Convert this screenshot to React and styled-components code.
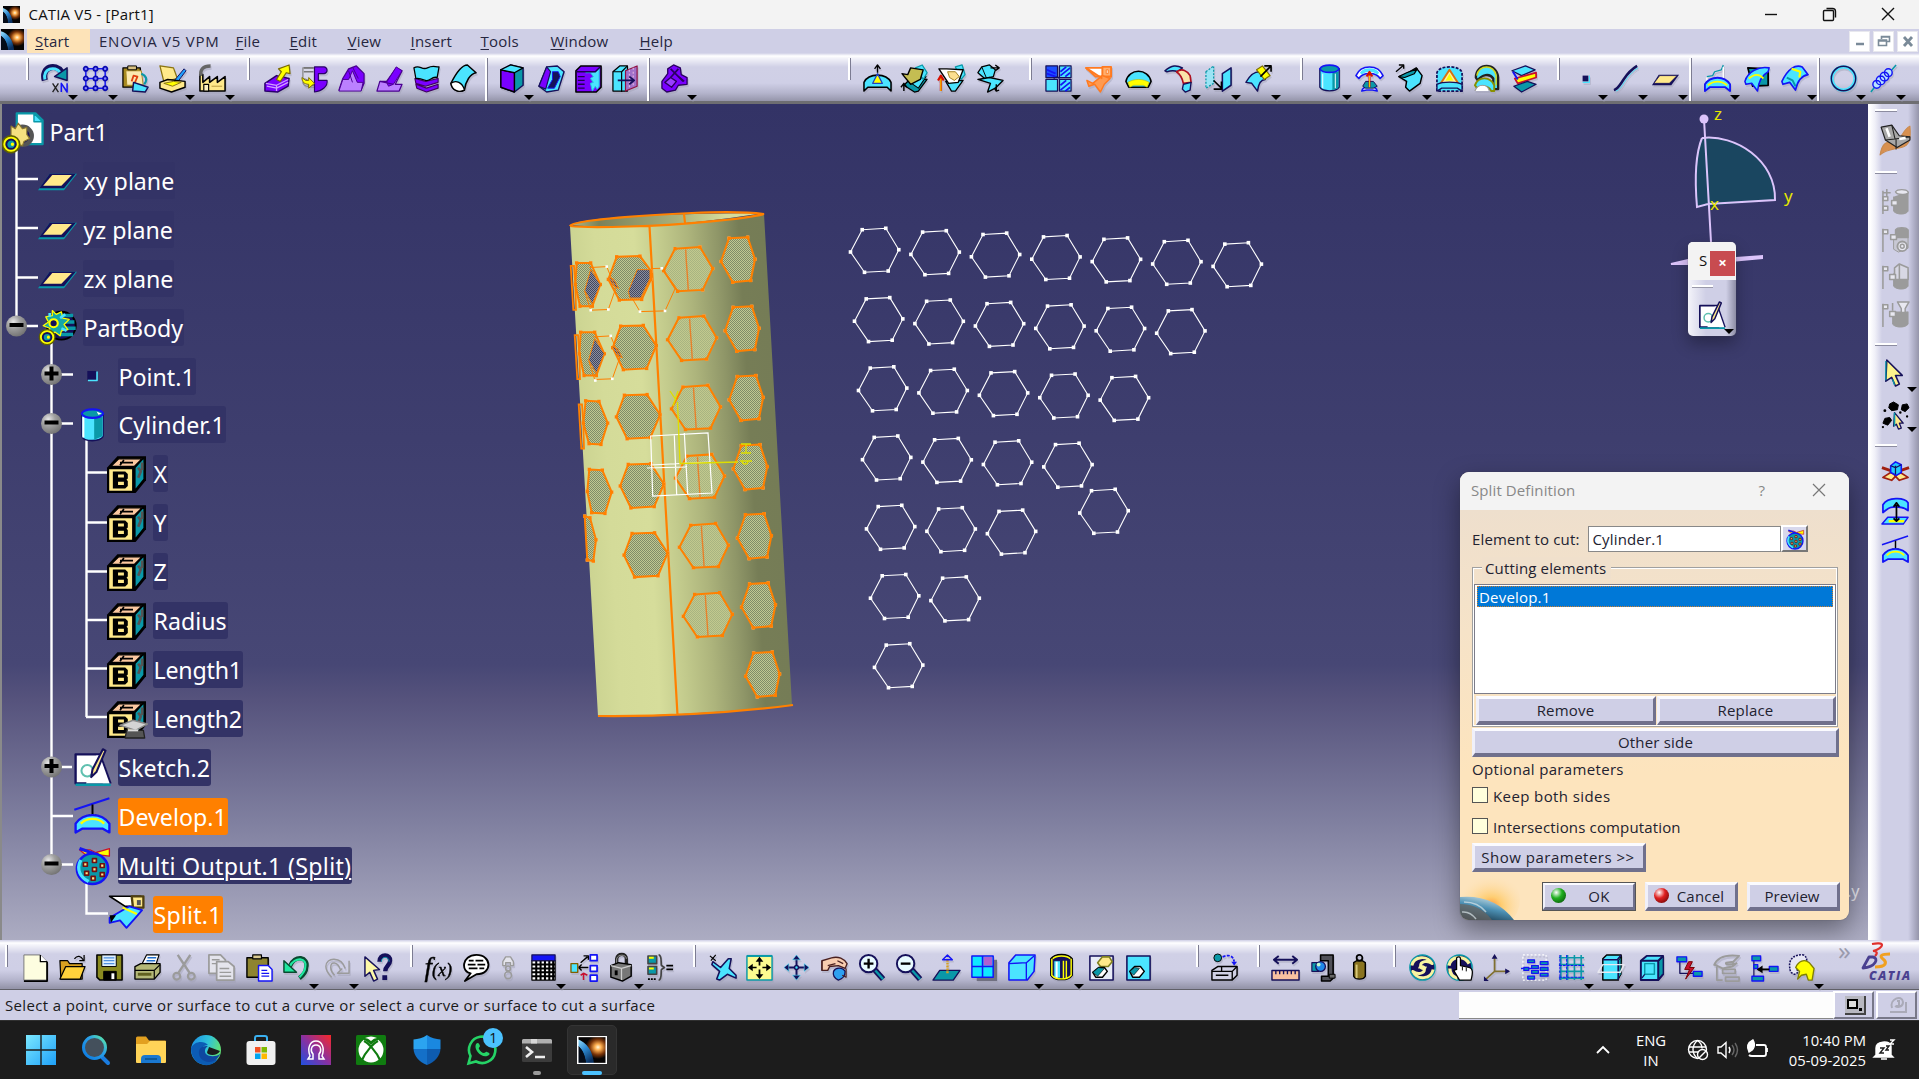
import React from "react";
import styled, { createGlobalStyle, css } from "styled-components";

const C = "#4be4ff", T = "#0a98a8", N = "#15105a", B = "#1414f5", P = "#7a00ff", L = "#bb80ff",
  Y = "#ffff00", K = "#000", S = "#ffe98a", W = "#fff", G = "#9b9b9b", O = "#ff8000", R = "#c8102e";

const ci = (x, y, r) => `M${x - r} ${y}a${r} ${r} 0 1 0 ${2 * r} 0a${r} ${r} 0 1 0 ${-2 * r} 0`;
const box = (x, y, w, h) => `M${x} ${y}h${w}v${h}h${-w}z`;

const PARAM = [
  ["M0 10L8 1h22v19l-8 10H0z", K, null, 0], ["M3 9l6-6h18l-6 6z", "#fbc8a0", K, 1], ["M10 6h10M13 4l-3 4", null, K, 1.3],
  ["M21.500 10l7-8v17l-7 9z", T, K, 1], ["M24 10l2 3-2 5M27 6v6", null, "#555", 2], [box(1, 10.5, 19, 18.5), S, K, 1.4],
  ["M4.500 13h9.500l2 2v3.500l-1 1 1 1v4l-2 2H4.500z", K, null, 0], [box(8.5, 15.3, 4.5, 2.4) + box(8.5, 21.2, 4.5, 2.4), S, null, 0],
];

/* Each icon is a list of [path, fill, stroke, stroke width] in a 30 x 30 box. */
const ICONS = {
  rotateN: [["M4 17C0 3 15-1 21 8", null, N, 6.5], ["M4 16C2 5 14 1 20 9", null, C, 3], ["M27 4V17L14 13z", T, N, 1.5], ["M12 20l6 9M18 20l-6 9", null, "#222", 1.4], ["M21 29v-9l6 9v-9", null, B, 1.6]],
  grid9: [["M5 2v26M15 2v26M25 2v26", null, B, 1.5], ["M2 5h26M2 15h26M2 25h26", null, B, 1.5], [ci(5, 5, 2.2) + ci(15, 5, 2.2) + ci(25, 5, 2.2) + ci(5, 15, 2.2) + ci(15, 15, 2.2) + ci(25, 15, 2.2) + ci(5, 25, 2.2) + ci(15, 25, 2.2) + ci(25, 25, 2.2), "#8080ff", "#0a0ab0", 1.8]],
  clipSurf: [["M2 4h18v20H2z", "#a88a20", K, 1.3], ["M5 7h16l2 15H6z", "#fbe9b0", "#a88a20", 1], ["M7 6V2h9v4z", "#d8c080", K, 1], ["M11 18l2-6 4 1-3 7", null, "#e04010", 1.8], ["M13 19l9 3 6 2-3 5-13-1z", C, N, 1.5], ["M21 10c5 2 7 6 3 11", null, T, 2.2]],
  paint: [["M2 2l14 2 4 11-14 3z", S, "#8a7410", 1.3], ["M27 5L17 17l-3 5 6-3L29 7z", "#20a0ff", N, 1], ["M2 19l8-3 18 2v6l-14 5L2 25z", S, K, 1.5], ["M6 20l10-2 8 1-9 4z", Y, "#8a7410", 1]],
  factory: [["M2 28V11h3v8l7-6v6l8-6v6l8-6v15z", S, K, 1.6], ["M3 12C2 6 5 2 13 2", null, "#666", 3.5], [box(6, 21, 5, 7), "#fff3c0", K, 1.2], ["M14 23h11", null, "#b89a40", 1]],
  pad: [["M2 20l12-8 13 3-1 8-11 6-13-1z", P, "#2a006a", 1.5], ["M3 20l11 2 12-6M14 22v6M4 23l10 2 12-6", null, "#d0a0ff", 1.3], ["M14 16l5-8-3-3L27 1l1 9-4-1-6 9z", Y, "#7a6a00", 1.2]],
  pocket: [["M3 4h12v20c-8 0-12-2-12-5 6 2 8-3 0-4z", "#d8d8e8", "#888", 1.3], ["M4 4h10M4 8h10M8 22h7", null, "#777", 1.6], ["M15 3h10c4 1 4 6 0 7h-6v7h9c1 6-5 11-13 12z", P, "#2a006a", 1.2], ["M2 14l4 3h3v-3l6 6-6 5v-4C4 21 2 18 2 14z", Y, "#7a6a00", 1]],
  loft: [["M2 27l4-12 6-10 8-3 8 8v10l-3 7z", P, "#4a0090", 1.3], ["M2 28l4-12h6l4-9 5 12h6l-2 9z", L, "#4a0090", 1], ["M12 7l4 12M16 3l6 12", null, "#4a0090", 1]],
  sweep: [["M2 28l3-10h7L22 4l6 3-7 14h7l-3 7z", L, "#4a0090", 1.3], ["M12 19L22 3l6 4-9 14-5 2z", P, "#4a0090", 1], ["M5 18l14 3", null, "#4a0090", 1.2]],
  thick: [["M3 15l11 3 13-3v4l-13 4-10-3zM4 21l11 4 12-4v4l-12 4-10-4z", P, "#400060", 1.2], ["M2 4c6-4 8 3 14 0s7-1 12-1l-2 11c-6-2-7 5-12 3s-7-3-10-2z", C, K, 1.3]],
  close: [["M2 20C9 6 14 1 19 1l9 8C22 10 17 18 16 27c-6 3-13 0-14-7z", C, K, 1.5], ["M2 20c5-4 12-1 14 7-6 3-13 0-14-7z", W, K, 1.3]],
  cubeP: [["M4 6l10-5 13 3v18l-9 7L4 24z", T, N, 1.5], ["M4 6l14 3v20L4 24z", P, K, 1.5], ["M4 6l10-5 13 3-9 5z", C, K, 1.3]],
  shellP: [["M10 3l11-1 7 6-6 19-12 2-8-6z", C, N, 1.5], ["M10 3l4 5-5 18-7-3z", P, N, 1.2], ["M16 8h6l2 5-6 12h-7l5-9z", N, B, 1]],
  splitP: [["M2 7l5-5h21v22l-5 5H2z", P, K, 1.6], ["M12 9l11-1 3-3v18l-2 3-2-3-3 5-2-8 3-1-3-4 3-2-3-4z", C, "#20c8e0", 1], ["M2 8h20l5-5", null, "#200050", 1.5], ["M4 13h7M4 17h7M4 21h7M4 25h7", null, "#200050", 1.4]],
  cubeArrow: [["M2 8l7-6h8v26H2z", C, K, 1.3], ["M2 8h9v21M11 8l6-6", null, K, 1.2], ["M15 7l12-5v21l-12 5z", "#a070c8", "#901040", 1.2], ["M19 6v18M23 4v18", null, "#e0b0e0", 1.2, "2 2"], ["M7 17h16M19 13l5 4-5 4", null, N, 1.8]],
  boolP: [["M2 18l6-8 0-5 6-4 7 3 1 7 6 3 0 7-9 1-3 5-9 2-5-4z", P, "#2a0060", 1.4], ["M5 19l6-5 6 4-5 6z", "#9a40ff", "#2a0060", 1.4], ["M11 5l13 13M19 5l-8 9M18 12l7 6", null, "#2a0060", 1.8]],
  extrude: [["M1 28V19C6 9 24 9 29 19v9l-4-4H5z", C, K, 1.6], ["M15 10l5 10H10z", Y, "#2040c0", 1.3], ["M15 9V2M12 5l3-4 3 4", null, K, 1.4]],
  offset: [["M4 22l7-7 17 1-9 12-4 1z", T, K, 1.3], ["M9 18l18-5-8 12z", C, K, 1.1], ["M16 4l7-3 5 8-4 7z", C, T, 1.3], ["M2 10l6 1 3-7 13 2-3 10-10 5z", "#c4bd52", K, 1.4], ["M4 28v-7M1 24l3-4 3 4", null, K, 1.5]],
  offset2: [["M9 18l18-1-8 11-4 0z", C, K, 1.3], ["M19 3l7-2 3 10-4 5z", C, T, 1.3], ["M2 5h8l17 1-5 13-10 1z", W, K, 1.4], ["M11 8h8l4 5-5 4-5-3z", "#fbdf90", "#a08020", 1], ["M4 28V13M1 17l3-5 3 5", null, "#d81000", 2.2], ["M4 28V15", null, Y, 1]],
  offset3: [["M3 9l4-6 8-2 6 5-2 7 -9 2z", C, K, 1.3], ["M7 3l5 12", null, K, 1], ["M3 16l12-2 14 3-8 8-8 4 3-9z", C, K, 1.4], ["M16 4h8M21 1l4 3-4 3M22 21v7M20 25l2 3 3-1", null, K, 1.4]],
  join: [[box(2, 2, 12, 12), "#1c50ff", N, 1.3], [box(16, 2, 12, 12), C, N, 1.3], [box(2, 16, 12, 12), C, N, 1.3], [box(16, 16, 12, 12), C, N, 1.3], ["M17 12L27 4M17 8l6-5M22 13l5-4M17 27l10-8M17 22l6-5M22 28l5-4M3 6l9 4M3 10l9 3", null, B, 1.8], ["M10 15q5-4 6 1", null, N, 1.2]],
  splitO: [["M2 4h26v9H12z", W, "#ff7a20", 2], ["M19 3h9v10h-9z", "#ffb070", "#ff7a20", 2], ["M23 6h2v4h-2z", W, "#ff7a20", 1], ["M3 17l6 3 10-8 8 3-6 6-4 8-6-8-6 2z", "#ff9a50", "#ff7a20", 1.5], ["M2 4l17 11", null, "#ff7a20", 2]],
  dome: [["M2 18C5 4 25 4 28 18l-3 6H5z", C, K, 1.7], ["M4 19c6-4 16-4 22 0l-2 5-4-2H10l-4 2z", Y, "#c0b800", .6]],
  bounds: [["M1 7C8 1 13 1 19 4l-5 4C10 6 6 7 3 8z", C, N, 1.6], ["M13 8c6-4 11-1 14 4l1 7-8 1c-1-6-3-9-7-12z", "#fbe4a9", "#b01020", 1.7], ["M20 21l8-2-1 8-5 2-3-3z", C, N, 1.4]],
  translate: [["M2 8l8-6v18l-8 5z", "#9ae4f5", T, 1.3, "2 1.5"], ["M19 10l9-6v18l-9 6z", C, N, 1.6], ["M10 17l8 8M18 18v8h-8", null, K, 1.6]],
  extrap: [["M2 19c5-9 9-11 14-11l6 8c-5 0-7 4-8 12l-6-8z", C, N, 1.5], ["M13 6l6-4 8 10-6 4z", Y, "#807000", 1.2], ["M17 13L28 2M21 2h7v6", null, K, 1.7]],
  cyl: [["M5 5v19c3 5 17 5 20 0V5z", C, N, 1.4], ["M18 8h6v17l-6 2z", T, null, 0], ["M5 5c3-5 17-5 20 0-3 5-17 5-20 0z", T, B, 1.8], ["M8 10v15M21 10v15", null, W, 1]],
  revolve: [["M1 12C6 0 24 0 29 12l-3 3C22 8 8 8 4 15z", W, B, 1.6], ["M5 9C9 3 21 3 25 9l-2 2c-4-4-12-4-16 0z", C, null, 0], ["M7 28c1-6 15-6 16 0l-5-1h-6z", W, B, 1.6], ["M8 23l3-5h8l4 5-4 2h-8z", T, N, 1], ["M15 24V9M12 13l3-5 3 5", null, "#d81000", 2], ["M15 24V12", null, Y, .8]],
  sweepS: [["M4 13l8-3 10-6 6 8-2 8-11 8-4-4 1-6z", C, K, 1.5], ["M4 13l6 1 10-4 3-5L12 9z", T, K, 1.2], ["M1 8l7-6M4 1h5v4", null, K, 1.4]],
  fill: [["M2 28V9C4 1 26 1 28 9v19z", C, N, 1.8, "3 1.5"], ["M15 6l9 14H6z", "#fff0a0", "#d87010", 2], ["M15 10l4 7h-8z", Y, null, 0], ["M2 28v-7c6-3 20-3 26 0v7l-5-3H7z", C, N, 1.4]],
  multi: [["M4 14C4-2 26-2 27 14v12h-5V15c-4-6-12-4-16 2z", C, "#222", 2.4], ["M5 12C7 0 23 0 25 12v10", null, "#d0d820", 1.5], ["M3 22c4-10 16-9 20 0v6h-3c-3-6-11-6-14-2z", C, "#8a9000", 2], ["M3 28c3-8 13-8 15 0", W, "#999", 1.2]],
  blend: [["M2 7l14-5 10 4-14 6z", C, N, 1.3], ["M5 15l22-6v5L8 20z", Y, R, 1.8], ["M4 23l14-5 9 3-15 8z", T, N, 1.3], ["M3 8l5 8", null, B, 2]],
  point: [[box(12, 12, 6, 6), N, null, 0], ["M12 19h7v-7", null, C, 1.2]],
  line: [["M3 27c4-1 6-5 10-11S22 5 27 2", null, N, 2.6], ["M5 28c4-1 6-5 10-11S24 6 28 4", null, C, 1]],
  plane: [["M8 11h21L21 22H1z", N, null, 0], ["M9 12h18l-8 8H3z", S, N, .8]],
  planeTree: [["M9 10h21L20 23H0z", T, null, 0], ["M9 10h20L20 21.500H1z", N, null, 0], ["M11 11h15l-8 8.500H4z", S, null, 0]],
  pointTree: [[box(11, 11, 7, 7), N, null, 0], ["M11.500 18.500h7v-7", null, C, 1.2]],
  cylTree: [["M2 5v20c3 5 22 5 26 0V5z", C, N, 1.4], ["M17 8h10v17l-10 3z", T, null, 0], ["M4 8v18", null, W, 2.5], ["M2 5c3-5 23-5 26 0-3 5-23 5-26 0z", T, B, 2], ["M20 3l6 2-4 1z", W, null, 0]],
  proj: [["M4 13l6-1 2-4 7-2 2-5", null, T, 1.3], ["M21 3v15M4 14v6", null, "#fff", 1.4], ["M2 28v-7C8 12 22 12 28 21v7l-5-4H7z", C, B, 1.9], ["M5 22c6-5 14-5 20 0", null, Y, 2]],
  inter: [["M5 4l21 1v17l-16 1z", T, K, 1.8], ["M2 18C5 8 16 2 27 4l-1 4C19 12 16 18 15 28l-6-8-6 1z", C, B, 1.6], ["M6 15c6-5 11-5 15 0", null, Y, 2]],
  isop: [["M2 18C8 5 16 0 23 3l6 8C22 12 18 18 16 27l-6-8-7 2z", C, B, 1.7], ["M12 5l9 3-1 6", null, Y, 2.2], ["M7 14l6 3 3 6", null, T, 2]],
  circle: [[ci(15, 15, 12), null, C, 3.5], [ci(15, 15, 12.6), null, N, 1.5]],
  helix: [["M2 29l6-8M22 8l6-7", null, T, 1.6], [ci(8, 21, 4) + ci(12, 17, 4.5) + ci(16, 13, 4.5) + ci(20, 9, 4), "#b8e4ff", B, 1.5]],
  newDoc: [["M3 2h17l7 7v19H3z", "#fdfde0", "#777", 1], ["M20 2v7h7", W, K, 1.3], ["M27 9v20H3", null, K, 1.8]],
  open: [["M2 8h8l2 3h13v16H3z", "#d8a020", K, 1.3], ["M2 27l6-13h20l-5 13z", "#ffd23c", K, 1.3], ["M17 6c3-4 7-3 9 1M27 2v6h-5", null, K, 1.3]],
  save: [["M2 2h26v26H5l-3-3z", "#8a8a20", K, 1.6], [box(7, 2, 15, 12), "#dff0ff", K, 1], ["M9 5h11M9 8h11M9 11h11", null, "#5090e0", 1.3], [box(9, 19, 13, 9), K, K, 1], [box(17, 21, 3, 6), W, null, 0]],
  print: [["M9 12L14 2h13l-4 12z", W, K, 1.2], ["M15 5h9M14 8h9M12 11h9", null, "#2070d0", 1.6], ["M2 14l6-3h20v9l-6 7H2z", "#b4b878", K, 1.4], ["M2 18h20l6-6M22 18v9", null, K, 1.2], ["M5 22h14", null, "#606020", 3]],
  cut: [["M8 2l12 18M21 2L9 20", null, G, 2.4], [ci(7, 24, 3.5) + ci(22, 24, 3.5), null, G, 2.2]],
  copy: [["M2 2h12l5 5v14H2z", "#e4e4ec", G, 1.8], ["M10 9h12l6 5v14H10z", "#e4e4ec", G, 1.8], ["M5 7h8M5 11h5M13 16h10M13 20h12M13 24h12", null, G, 1.4]],
  paste: [["M2 5h22v20H2z", "#8e8430", K, 1.5], ["M8 6V2h9v4z", "#d8c890", K, 1.2], ["M14 13h10l4 4v12H14z", W, B, 1.5], ["M17 18h6M17 21h8M17 24h8", null, B, 1.2]],
  undo: [["M8 14C13 1 28 4 25 15c0 4-3 8-7 11", null, "#0a4a30", 4.6], ["M8 14C13 3 27 5 24 15c0 4-3 7-6 10", null, "#20e8a0", 2.2], ["M2 8v12h13z", "#20e8a0", "#0a4a30", 1.5]],
  redo: [["M24 16C20 3 4 4 4 14c0 4 3 8 6 11", null, G, 1.5], ["M19 17C16 9 9 8 9 15c0 4 2 6 4 8M28 8v13H16l5-5", null, G, 1.5]],
  help: [["M2 4l15 13-6 1 4 9-4 2-4-9-5 4z", "#fdf8a8", N, 1.5], ["M17 9c0-9 12-8 11-1 0 5-5 5-5 11", null, N, 4.5], [box(20, 23, 5, 5), N, null, 0], ["M19 9c0-6 8-6 8 0", null, T, 1]],
  speech: [["M15 2C-1 2-1 20 9 21L3 29l12-7C32 22 31 2 15 2z", W, K, 1.9], ["M7 8h5M14 8h8M6 12h8M16 12h8M7 16h9M18 16h5", null, K, 1.8]],
  chain: [["M10 4h5l3 5v4h-3v-3h-5v3H7V9z", "#e4e4ec", G, 1.4], [ci(12.5, 16, 2.5) + ci(12.5, 23, 3.5), null, G, 1.6]],
  table: [[box(3, 8, 24, 20), W, K, 1.3], ["M7.500 8v20M12 8v20M16.500 8v20M21 8v20M25 8v20M3 12h24M3 16h24M3 20h24M3 24h24", null, K, 2.1], [box(3, 2, 24, 6), B, N, 1.3]],
  relat: [[box(1, 11, 7, 9), C, "#806000", 1.4], [box(21, 2, 7, 6) + box(21, 13, 7, 6) + box(21, 23, 7, 6), W, B, 1.8], ["M9 15h10M9 15l3-3M9 15l3 3M11 10L18 4M14 3h5v4", null, K, 1.4], ["M14 21v7M18 23l-4-2-3 2", null, R, 1.6]],
  lock: [["M10 13V6c1-6 10-6 10 0v6", null, "#222", 3.4], ["M10 12V6c1-5 10-5 10 0", null, "#999", 1], ["M4 13l8-3 13 2v12l-9 5-12-4z", "#777", K, 1.5], ["M4 13l11 3v12M15 16l10-3", null, "#ccc", 1.3], [box(8, 18, 3, 5), K, null, 0]],
  equiv: [["M1 3h9v8H1zM1 14h9v8H1z", T, "#444", 1.6], ["M2 5h5M2 16h5", null, Y, 2], ["M12 2c4 0 2 9 3 11l3 2-3 2c-1 2 1 11-3 11", null, "#444", 1.8], ["M20 13h7M20 17h7M1 27h2M4 27h2M7 27h2", null, K, 1.8]],
  plane3: [["M5 9l8 6 8-9 3 0-2 10 7 7 0 3-9-4-8 6-3-1 3-8-8-7z", C, N, 1.6], ["M2 3l6 5M8 2L3 8", null, K, 1.2]],
  fit: [[box(2, 3, 26, 25), "#fdfb90", T, 1.5], [box(2, 2, 26, 2), T, null, 0], ["M15 6v7M15 17v8M5 15h7M18 15h7", null, K, 1.8], ["M11 9l4-5 4 5zM11 22l4 5 4-5zM8 11l-5 4 5 4zM22 11l5 4-5 4z", K, null, 0]],
  pan: [["M15 4v23M4 15h23", null, N, 2], ["M11 7l4-5 4 5zM11 23l4 5 4-5zM7 11l-5 4 5 4zM23 11l5 4-5 4z", N, C, .6], [ci(15, 15, 2), C, N, 1.5]],
  hand: [["M2 8l10-3c7-2 13 1 16 6l-2 5-7-3-9 1-2 4-6 0z", "#f8cdb0", "#4a2020", 1.4], ["M2 8v10M8 13l8-2M18 8l6 3", null, "#4a2020", 1.3], ["M14 19c2-4 9-5 12 0 0 6-3 8-7 9-4-2-6-5-5-9z", "#30a0f0", N, 1.3], ["M27 16v9l-4-2", null, "#4a2020", 1.2]],
  zoomIn: [["M18 17l9 10", null, N, 6], ["M18 17l9 10", null, T, 2.4], [ci(12, 11, 9), "#e8fbff", N, 2], ["M12 6v10M7 11h10", null, K, 2.4]],
  zoomOut: [["M18 17l9 10", null, N, 6], ["M18 17l9 10", null, T, 2.4], [ci(12, 11, 9), "#e8fbff", N, 2], ["M7 11h10", null, K, 2.4]],
  normal: [["M8 18h21l-7 10H1z", T, N, 1.4], ["M16 21V7", null, "#d8a020", 2.5, "2 1"], ["M11 7l5-5 5 5z", null, B, 1.5]],
  quad: [[box(8, 7, 21, 22), "#707080", null, 0], [box(3, 3, 22, 22), "#10e8ff", B, 1.5], [box(15, 4, 9, 9), "#b060d0", null, 0], ["M14 3v22M3 14h22", null, B, 1.6]],
  cubeC: [["M2 10l7-8h20l-1 17-7 9H2z", C, B, 1.6], ["M2 11l18-1 8-7M20 10v18", null, B, 1.4]],
  cylY: [["M4 6c4-6 18-6 22 0v17c-4 6-18 6-22 0z", N, K, 1.6], [box(7, 8, 7, 18), C, N, 1], ["M10 9v17", null, W, 2], ["M6 6c3-4 15-4 18 0M17 8v18M20 8v18", null, Y, 1.5], ["M5 6v17c4 5 16 5 20 0V6", null, Y, 1.5]],
  hideShow: [[box(3, 3, 24, 25), "#e8ecf8", N, 1.6], ["M11 10l5-6h7l3 5-4 5h-8z", S, "#808020", 1.6], ["M6 20l6-5h6l3 4-5 6H9z", W, K, 1.5], ["M12 15l6 1-7 8-5-4z", T, K, .6]],
  swap: [[box(3, 3, 24, 25), C, N, 1.6], ["M6 19l5-5h6l4 5-5 6H9z", W, K, 1.5], ["M11 15l5 1-6 7-4-4z", T, K, .6]],
  catalog: [[ci(8, 5, 4), T, K, 1], ["M13 4c7-3 11-1 12 5", null, B, 1.8, "3 1.5"], ["M22 9h6l-3 4z", B, null, 0], ["M2 18l6-4h20v9l-5 5H2z", "#d0d0e4", K, 1.5], ["M2 19h21v9M23 19l5-5M12 14v5M6 23h13", null, K, 1.4]],
  measure: [["M4 7h22M8 3L3 7l5 4M22 3l5 4-5 4", null, N, 2], [box(1, 18, 28, 10), "#f8c0a0", N, 1.5], ["M5 18v4M9 18v4M13 18v4M17 18v4M21 18v4M25 18v4", null, N, 1.4]],
  caliper: [["M13 2h13v24l-3 3h-9v-5h7V8h-8z", "#505058", K, 1.6], ["M22 22h6v4h-6z", "#666", K, 1], ["M4 10h7v9H4z", T, N, 1.2], [ci(13, 14, 5), "#2088e8", N, 1.3], [ci(11, 12, 2), "#c0f8d0", null, 0]],
  weight: [["M9 10l3-2h6l3 2v14c-2 4-10 4-12 0z", "#8a7420", K, 1.5], [ci(15, 5, 3), null, K, 1.8], ["M12 12v14", null, "#d8c878", 2]],
  swirl: [[ci(15, 15, 13), N, T, 1.6], ["M4 13C6 3 20 2 25 11c-5-4-12-2-12 2 0 4 5 4 5 1M26 17c-2 10-16 12-21 2 5 4 12 2 12-2 0-4-5-4-5-1", null, "#f8f4a0", 3]],
  swirlHand: [[ci(15, 15, 13), N, T, 1.6], ["M4 13C6 3 20 2 25 11M5 16c0 6 4 9 8 10", null, "#f8f4a0", 3.4], ["M12 5c2-2 4-1 4 1v7l9 2c4 1 4 5 2 13H15l-6-10 3-1z", W, K, 1.3], ["M18 14v4M22 15v4", null, K, 1]],
  axis: [["M13 19V3M13 19h15M13 19L3 28", null, "#807030", 1.8], ["M10 6l3-5 3 5zM24 16l5 3-5 3zM2 24v5h5z", N, null, 0]],
  tree: [[box(3, 2, 24, 26), null, "#fff", 1.2, "2 2"], ["M1 16h3M7 16h5", null, B, 1.5], [box(8, 7, 7, 3) + box(4, 15, 5, 3) + box(12, 13, 7, 3) + box(12, 18, 7, 3) + box(8, 24, 7, 3) + box(21, 9, 8, 3) + box(21, 15, 8, 3) + box(21, 21, 8, 3), T, B, 1.3]],
  hash: [["M4 2v26M11 2v26M18 2v26M25 2v26M2 5h26M2 12h26M2 19h26M2 26h26", null, T, 1.6], ["M3 2v26M10 2v26M2 13h26M2 25h26", null, B, 1.1, "3 1"]],
  section: [["M6 6l4-4h15v6l-3 20H6z", C, K, 1.5], ["M22 8l3-4v18l-3 5z", T, K, 1], ["M6 7h15l4-5M22 7v21", null, N, 1.5], ["M1 20l5-8h22l-4 8z", null, "#e8e8f0", 1.5]],
  boxC: [["M4 8l6-5h17v19l-5 6H4z", C, N, 2], ["M22 9l5-5v17l-5 6z", T, N, 1], ["M4 8h18v20M22 8l5-5", null, N, 2], [box(8, 11, 10, 11), C, T, 1.5], ["M8 22l-3 4", null, N, 1.3]],
  bolt: [["M5 9v12h17", null, N, 1.3], [box(2, 4, 10, 5) + box(19, 19, 9, 5), T, B, 1.4], ["M14 9l-4 8h5l-4 10 9-12h-5l3-6z", R, "#700", 1]],
  greyHand: [["M2 13C5 5 12 1 28 3l-6 6-7 1c-3 2 6 3 8 0M3 12l4 2 4 2 10-2 5-4", null, G, 2], ["M5 14v14h6M11 17h13v4H11zM14 25h14v4H14z", null, G, 1.8]],
  insert: [["M4 7v20M4 14h4", null, N, 1.2], [box(2, 3, 9, 5) + box(2, 24, 12, 5) + box(20, 14, 9, 5) + box(4, 12, 4, 4), T, B, 1.4], ["M8 17h12", null, K, 2], ["M7 17l6-4v8z", K, null, 0]],
  surfY: [["M3 16C1 6 8 1 17 2c3 2 4 4 3 6l-9 5c-2 3 2 7-2 9-4 0-6-3-6-6z", "#e6e6f4", N, 1.6, "2 1.2"], ["M9 15c3-7 9-9 14-5l5 6-2 12h-4l-2-6-5 1-4 4 2-8z", Y, "#808000", 1.4]],
  chair: [["M1 29C3 18 6 17 14 16 22 15 22 5 29 2c1 12 0 18-8 20S6 24 1 29z", "#d89050", "#c88a50", 1], ["M2 3l10-2 7 10 10 1 0 3-12 7-11-7z", "#a8a8a8", "#222", 1.1], ["M6 15l9-1M15 14l14-2M16 14v10M15 14L12 1", null, "#222", 1], ["M7 4l3 8M19 14l6-1", null, W, 2.4]],
  greyA: [["M13 10v15c3 4 13 4 15 0V5", G, G, 1], ["M15 5c2-3 11-3 13 0s-11 4-13 0z", "#e8e8f0", G, 1.4], [box(2, 10, 5, 4) + box(2, 20, 5, 4) + box(11, 14, 6, 5), "#e8e8f0", G, 1.6], ["M2 4v24M6 2v8M2 6h8", null, G, 1.6]],
  greyB: [["M13 10v15l5 3 10-4V5", "#c8c8d4", G, 1], ["M15 5c2-3 11-3 13 0v8H15z", G, G, 1.4], [box(2, 5, 5, 4) + box(10, 10, 6, 5), "#e8e8f0", G, 1.6], ["M2 4v24", null, G, 1.6], [ci(22, 22, 5), "#e8e8f0", G, 2], [ci(22, 22, 2), null, G, 1.5]],
  greyC: [["M13 12v13c3 4 13 4 15 0V10", G, G, 1], ["M14 6l5-4 9 4v12H14z", "#d8d8e4", G, 1.6], [box(2, 5, 5, 4) + box(9, 13, 6, 5), "#e8e8f0", G, 1.6], ["M2 4v24M19 2v16", null, G, 1.6]],
  greyD: [["M12 12v13c3 4 13 4 16 0V12", G, G, 1], ["M17 2h12l-4 7v4h-4V9z", "#e8e8f0", G, 1.5], [box(2, 5, 5, 4) + box(9, 12, 6, 5), "#e8e8f0", G, 1.6], ["M2 4v24M12 3v8", null, G, 1.6]],
  cursor: [["M6 2l16 16-7 0 4 9-4 2-4-9-6 4z", "#fdf48c", N, 1.6], ["M5 3v20M12 22l2 6", null, T, 1.3]],
  multiSel: [["M9 3l4-2 5 3-1 5-6 1-3-3zM22 4l5-1 2 4-4 4-4-2zM4 18l5-1 2 3-4 5-5-2z", K, K, 1], [ci(4, 10, 1.5) + ci(20, 12, 1.3) + ci(2, 27, 1.2) + ci(27, 16, 1.2), K, null, 0], ["M14 12l9 11-4 0 2 5-3 1-2-5-3 2z", S, N, 1.3], ["M14 12v14", null, T, 1.6]],
  explode: [["M1 9l9 3M29 9l-9 3", null, "#a02010", 3], ["M2 19l8-5 6 3-5 5zM28 19l-8-5-6 3 5 5z", S, "#a02010", 1.8], ["M10 7l5-4 6 3v8l-5 3-6-3z", "#20c8ff", B, 1.6], ["M15 7v9M10 7l5 2 6-3", null, N, 1.3]],
  develop: [["M2 16V8C7 0 24 0 28 6v8c-6-5-18-5-22-1z", C, B, 1.8], ["M1 28l6-7h21l-5 7z", C, B, 1.5], ["M8 25h16", null, Y, 2.5], ["M16 24V8M13 10l3-4 3 4M13 22l3 3 3-3", null, K, 1.8]],
  develop2: [["M1 10L28 1", null, B, 1.6], ["M15 6v11M12 14l3 4 3-4", null, K, 1.5], ["M2 28v-7c6-9 20-9 26 0v7l-5-3H7z", C, B, 1.8], ["M6 21c5-5 13-5 18 0", null, Y, 1.8]],
  sketch: [[box(2, 5, 20, 23), W, N, 1.8], ["M18 6h4l7 22H10z", W, null, 0], ["M2 29h27", null, T, 2], ["M22 8l7 20", null, N, 1.5], [ci(11, 18, 4.5), null, "#60c0b0", 1.6], ["M23 1l2 1-7 17-4 4 1-6z", S, N, 1.6]],
  multiOut: [["M5 3h8l6 3-8 2zM18 5l10-3v6l-8-1z", Y, R, 1], ["M5 2l11 4", null, B, 2.5], [ci(15, 18, 12), T, B, 2], ["M6 11c-4 8 0 14 6 17", null, C, 2.5], [box(8, 13, 3, 3) + box(15, 10, 3, 3) + box(21, 14, 3, 3) + box(9, 20, 3, 3) + box(15, 17, 3, 3) + box(14, 24, 3, 3) + box(21, 21, 3, 3), S, "#701010", 1.3]],
  splitS: [["M2 1h24v8H14z", W, K, 1.3], ["M19 1h9v9h-8z", S, "#504010", 1.8], [box(23, 4, 3, 4), "#555", null, 0], ["M2 18l5-3 10-6 10 3-6 7-6 7-5-6-8 2z", C, B, 1.4], ["M12 10l11 5", null, Y, 1.6], ["M2 16l5 0-4 6z", K, null, 0]],
  param: PARAM,
  paramCap: [...PARAM, ["M15 24h13l1 6H14z", "#555", "#222", 1], ["M10 20l10-4 11 3-9 5z", "#d4d4d4", "#888", 1.2], ["M16 24h8", null, "#ddd", 1.5]],
  body: [[ci(18, 14, 11), N, K, 1.5], ["M14 6h13M16 11h12M15 16h14M16 21h11", null, T, 2.8], ["M11 2l3 3 4-2 1 5 5 1-4 4 3 4-5 1-1 4-4-3-4 2 0-5-5-2 4-3-2-4 5-1z", "#14a8a8", Y, 1], [ci(12, 12, 3.2), N, Y, 1.6], ["M17 8l4-3M18 16l4 2M9 4v3", null, C, 2], [ci(7, 23, 6), Y, "#606000", 1], [ci(7, 23, 3.3), T, N, 1.5], [ci(8, 23, 1.2), Y, null, 0]],
  part: [["M11 1h13l5 5v17H11z", W, T, 1.6], ["M23 1v6h6z", C, T, 1], [ci(15, 17, 6.5), N, "#555", 3], ["M7 10l3 2 2-4 3 4 3-1 0 5 2 3-4 2-1 3-4-1-4 2z", "#f5e080", "#8a7830", .8], [ci(7, 23, 6), Y, "#606000", 1.2], [ci(7, 23, 3.3), T, N, 1.4], [ci(8, 23, 1.2), Y, null, 0]],
};

const Glyph = styled.svg`
  display: block;
  width: ${p => p.$s || 30}px;
  height: ${p => p.$h || p.$s || 30}px;
  overflow: visible;
`;

function Icon({ name, size, height }) {
  return (
    <Glyph viewBox="0 0 30 30" $s={size} $h={height} preserveAspectRatio="none">
      {(ICONS[name] || []).map(([d, fill, stroke, w, dash], i) => (
        <path key={i} d={d} fill={fill || "none"} stroke={stroke || "none"} strokeWidth={w} strokeDasharray={dash} strokeLinejoin="round" />
      ))}
    </Glyph>
  );
}

const PlanetSvg = styled.svg`
  display: block;
  width: ${p => p.$s}px;
  height: ${p => p.$h || p.$s}px;
`;
function Planet({ size, height, frame }) {
  return (
    <PlanetSvg $s={size} $h={height} viewBox="0 0 30 36" preserveAspectRatio="none">
      <defs>
        <radialGradient id="sun" cx="0.7" cy="0.4" r="0.42">
          <stop offset="0" stopColor="#fffbe0" /><stop offset="0.25" stopColor="#ffb050" />
          <stop offset="0.65" stopColor="#7a3408" /><stop offset="1" stopColor="#060404" />
        </radialGradient>
        <linearGradient id="earth" x1="0" y1="0" x2="0.6" y2="1">
          <stop offset="0" stopColor="#a0e4ff" /><stop offset="0.5" stopColor="#2c88d0" /><stop offset="1" stopColor="#0a3060" />
        </linearGradient>
      </defs>
      <rect width="30" height="36" fill="url(#sun)" />
      <path d="M0 4C10 8 16 20 17 36H9C8 24 5 16 0 12z" fill="url(#earth)" />
      <path d="M0 12C5 16 8 24 9 36H0z" fill="#050c18" />
      {frame && <rect x="0.7" y="0.7" width="28.6" height="34.6" fill="none" stroke="#fff" strokeWidth="1.6" />}
    </PlanetSvg>
  );
}

const Global = createGlobalStyle`
  html, body { margin: 0; padding: 0; overflow: hidden; background: #1c1c1c; }
  * { box-sizing: border-box; }
`;
const ui = css`font-family: "Open Sans", "Noto Sans", sans-serif;`;
const uiTree = css`font-family: "Noto Sans", "Open Sans", sans-serif;`;

const Screen = styled.div`
  width: 1919px;
  height: 1079px;
  display: flex;
  flex-direction: column;
  overflow: hidden;
  ${ui}
  font-size: 15px;
  color: #1a1a1a;
`;
const TitleBar = styled.header`
  height: 29px;
  flex: none;
  display: flex;
  align-items: center;
  background: #f3f3f3;
  padding-left: 3px;
`;
const AppTitle = styled.h1`
  margin: -2px auto 0 8.5px;
  font-size: 15px;
  font-weight: 400;
  letter-spacing: 0.18px;
  color: #111;
`;
const WinButtons = styled.div`
  display: flex;
  align-items: center;
  width: 177px;
`;
const WinButton = styled.div`
  width: 58.4px;
  display: flex;
  justify-content: center;
`;
const MenuBar = styled.nav`
  height: 24px;
  flex: none;
  display: flex;
  align-items: center;
  background: #cfcfe6;
`;
const MenuItem = styled.div`
  width: ${p => p.$w}px;
  height: 24px;
  padding-left: ${p => p.$pl || 0}px;
  line-height: 25px;
  font-size: 15px;
  letter-spacing: ${p => p.$ls ?? 0.2}px;
  white-space: nowrap;
  color: #262640;
  background: ${p => (p.$active ? "#fde3b8" : "transparent")};
  &::first-letter { text-decoration: ${p => (p.$plain ? "none" : "underline")}; text-underline-offset: 2px; }
`;
const MdiButtons = styled.div`
  margin-left: auto;
  display: flex;
  gap: 3px;
  padding-right: 1px;
`;
const MdiButton = styled.div`
  width: 21px;
  height: 21px;
  background: #fff;
  border: 1px solid #e8e8ee;
  display: flex;
  align-items: center;
  justify-content: center;
`;

const Toolbar = styled.div`
  flex: none;
  height: ${p => p.$h}px;
  display: flex;
  padding-left: ${p => p.$pl}px;
  background: linear-gradient(180deg, #cfcfe6 0, #fff 3px, #f4f4fa 5px, #d0d0e6 14px, #cfcfe6 30px, #b4b4cc 40px, #9595aa 48px);
  border-bottom: ${p => p.$line};
`;
const ToolGroup = styled.div`
  position: relative;
  flex: none;
  display: flex;
  width: ${p => p.$w}px;
  padding-left: ${p => p.$pl + 0.5}px;
  padding-top: ${p => p.$pt}px;
  &::before {
    content: "";
    position: absolute;
    left: -1px;
    top: 5px;
    width: 3px;
    height: ${p => (p.$full ? 43 : 22)}px;
    background: linear-gradient(90deg, #fff 0 66%, #7c7c92 66%);
  }
`;
const Tool = styled.div`
  position: relative;
  flex: none;
  width: ${p => p.$w || (p.$arrow ? 40.2 : 37.4)}px;
  height: 36px;
  filter: drop-shadow(1px 2px 0.6px rgba(160, 160, 180, 0.45));
`;
const Drop = styled.i`
  position: absolute;
  left: ${p => p.$x || 27}px;
  top: ${p => p.$y || 31}px;
  border: 5px solid transparent;
  border-top-color: #000;
  border-bottom: 0;
`;
const Fx = styled.span`
  display: block;
  font: italic 27px/28px "Liberation Serif", serif;
  letter-spacing: 0;
  color: #000;
  white-space: nowrap;
  -webkit-text-stroke: 0.4px #000;
  small { font-size: 18px; }
`;

const TOP = [
  { w: 221, pl: 13, t: ["rotateN*", "grid9*", "clipSurf", "paint*", "factory*"] },
  { w: 238, pl: 14, t: ["pad", "pocket", "loft", "sweep", "thick", "close"] },
  { w: 162, pl: 10, full: 1, t: ["cubeP*", "shellP", "splitP", "cubeArrow"] },
  { w: 201, pl: 11, full: 1, t: ["boolP*"] },
  { w: 181, pl: 13, t: ["extrude", "offset", "offset2", "offset3"] },
  { w: 271, pl: 13, t: ["join*", "splitO*", "dome*", "bounds*", "translate*", "extrap*"] },
  { w: 257, pl: 13, t: ["cyl*", "revolve*", "sweepS*", "fill", "multi", "blend"] },
  { w: 132, pl: 12, t: ["point*", "line*", "plane*"] },
  { w: 128, pl: 12, full: 1, t: ["proj*", "inter", "isop*"] },
  { w: 101, pl: 10, full: 1, t: ["circle*", "helix*"] },
];
const BOTTOM = [
  { w: 405, pl: 14, t: ["newDoc", "open", "save", "print", "cut", "copy", "paste", "undo*", "redo*", "help"] },
  { w: 283, pl: 13, t: ["fx", "speech", "chain", "table*", "relat", "lock*", "equiv"] },
  { w: 503, pl: 13, t: ["plane3", "fit", "pan", "hand", "zoomIn", "zoomOut", "normal", "quad", "cubeC*", "cylY*", "hideShow", "swap"] },
  { w: 61, pl: 12, t: ["catalog"] },
  { w: 136, pl: 12, t: ["measure", "caliper", "weight"] },
  { w: 444, pl: 13, t: ["swirl", "swirlHand", "axis", "tree", "hash*", "section*", "boxC", "bolt", "greyHand", "insert", "surfY*"] },
];
const SLOT = { speech: 34.5, chain: 33 };

function Groups({ groups, pt }) {
  return groups.map((g, i) => (
    <ToolGroup key={i} $w={g.w} $pl={g.pl} $full={g.full} $pt={pt}>
      {g.t.map(t => {
        const arrow = t.endsWith("*");
        const name = t.replace("*", "");
        return (
          <Tool key={t} $arrow={arrow} $w={SLOT[name]}>
            {name === "fx" ? <Fx>f<small>(x)</small></Fx> : <Icon name={name} size={29} height={29} />}
            {arrow && <Drop />}
          </Tool>
        );
      })}
    </ToolGroup>
  ));
}

const Middle = styled.div`
  flex: none;
  height: 836px;
  display: flex;
`;
const Viewport = styled.main`
  position: relative;
  width: 1868px;
  height: 836px;
  overflow: hidden;
  background: linear-gradient(180deg, #333366 0%, #3e3e6e 40%, #474775 67%, #55527c 71%, #8080a0 86%, #acacc2 100%);
  border-left: 2px solid #8a8a8a;
`;
const Scene = styled.svg`
  position: absolute;
  left: -2px;
  top: 0;
  width: 1868px;
  height: 836px;
`;
const Tree = styled.ul`
  position: absolute;
  left: -2px;
  top: 3px;
  margin: 0;
  padding: 0;
  list-style: none;
`;
const TreeRow = styled.li`
  display: flex;
  align-items: center;
  height: 48.93px;
  padding-left: ${p => p.$indent}px;
`;
const TreeIcon = styled.span`
  flex: none;
  width: ${p => p.$w}px;
  height: 38px;
`;
const TreeLabel = styled.span`
  ${uiTree}
  height: 37px;
  line-height: 39px;
  padding: 0 1px 0 0.5px;
  border-radius: 3px;
  font-size: 23.2px;
  letter-spacing: ${p => p.$ls || 0}px;
  white-space: nowrap;
  color: #fff;
  background: ${p => (p.$hot ? "#ff8000" : "#333366")};
  text-decoration: ${p => (p.$under ? "underline 2px" : "none")};
  text-underline-offset: 3px;
`;

const ROWS = [
  { l: 0, icon: "part", t: "Part1" },
  { l: 1, icon: "planeTree", t: "xy plane" },
  { l: 1, icon: "planeTree", t: "yz plane" },
  { l: 1, icon: "planeTree", t: "zx plane" },
  { l: 1, icon: "body", t: "PartBody", ls: -0.1 },
  { l: 2, icon: "pointTree", t: "Point.1" },
  { l: 2, icon: "cylTree", t: "Cylinder.1", ls: 0.1 },
  { l: 3, icon: "param", t: "X" },
  { l: 3, icon: "param", t: "Y" },
  { l: 3, icon: "param", t: "Z" },
  { l: 3, icon: "param", t: "Radius" },
  { l: 3, icon: "param", t: "Length1", ls: -0.2 },
  { l: 3, icon: "paramCap", t: "Length2", ls: -0.2 },
  { l: 2, icon: "sketch", t: "Sketch.2" },
  { l: 2, icon: "develop2", t: "Develop.1", hot: 1 },
  { l: 2, icon: "multiOut", t: "Multi Output.1 (Split)", under: 1, ls: 0.3 },
  { l: 3, icon: "splitS", t: "Split.1", hot: 1, ls: 0.2 },
];
const INDENT = [1, 38, 73, 107];
const ICON_W = [48, 45, 45, 46];

const CylBox = styled.span`
  display: block;
  padding: 2px 0 0 7px;
`;
function RowIcon({ name }) {
  if (name === "cylTree") return <CylBox><Icon name={name} size={25} height={34} /></CylBox>;
  const s = name === "part" ? 43 : 39;
  return <Icon name={name} size={s} height={name === "part" ? 42 : 38} />;
}

const shift = (pts, dx, dy, ox, oy, sy = 3) => pts.map(([x, y]) => `${(ox + (x + dx) / 3).toFixed(1)},${(oy + (y + dy) / sy).toFixed(1)}`).join(" ");
const onSkin = (pts, dx, dy) => shift(pts, dx, dy, 550, 200, 2.958);
const FLAT = [[65, 59], [136, 55], [175, 119], [143, 183], [72, 187], [30, 126]];
const COL_D = [[537, 113], [593, 110], [615, 175], [602, 238], [548, 243], [513, 182]];
const COL_C = [[375, 144], [450, 139], [488, 203], [458, 266], [383, 270], [341, 209]];
const COL_B = [[212, 373], [280, 371], [319, 431], [290, 498], [220, 502], [188, 437]];
const B0 = [[200, 168], [270, 166], [303, 210], [303, 235], [275, 294], [208, 296], [175, 235]];
const A0 = [[80, 186], [122, 186], [151, 250], [127, 314], [90, 314], [76, 250]];
const A2 = [[107, 594], [147, 596], [173, 660], [153, 723], [117, 721], [100, 660]];
const A3 = [[118, 797], [157, 799], [185, 864], [165, 927], [125, 925], [112, 862]];
const A4 = [[104, 935], [120, 940], [138, 1005], [130, 1068], [112, 1065]];
const BACK = [[122, 205], [151, 250], [127, 308], [104, 268]];
const BACK_SMALL = [[175, 228], [192, 235], [206, 262], [188, 252]];
const THIN = [[118, 200], [170, 197], [197, 262], [175, 324], [122, 326], [104, 270]];

const flat = [];
for (let r = 0; r < 7; r++) for (let c = 0; c < 7 - r; c++) flat.push([c * 181.3 + r * 12, c * 7.2 + r * 207.7]);
flat.push([688, 783]);

const wrapped = [
  ...[0, 1, 2, 3, 4, 5, 6].map(i => [COL_D, i * 12.3, i * 204.5]),
  ...[0, 1, 2, 3, 4, 5].map(i => [COL_C, i * 11.8, i * 204.5]),
  [B0, 0, 0],
  ...[0, 1, 2, 3].map(i => [COL_B, i * 11.3, i * 204.5]),
  [A0, 0, 0], [A0, 12, 205], [A2, 0, 0], [A3, 0, 0], [A4, 0, 0],
];

function Ball({ x, y, plus }) {
  return (
    <g>
      <circle cx={x} cy={y} r="10.5" fill="url(#ball)" />
      <path d={`M${x - 7} ${y - 1}h14${plus ? `M${x} ${y - 8}v14` : ""}`} stroke="#000" strokeWidth="4" />
    </g>
  );
}

function ModelScene() {
  const dot = (s, k, c, r) => s.split(" ").map((q, i) => {
    const [x, y] = q.split(",").map(Number);
    return <rect key={k + "-" + i} x={x - r} y={y - r} width={2 * r} height={2 * r} fill={c} />;
  });
  return (
    <Scene viewBox="0 104 1868 836">
      <defs>
        <radialGradient id="ball" cx="0.35" cy="0.3" r="0.8">
          <stop offset="0" stopColor="#e8e8e8" /><stop offset="0.4" stopColor="#a0a0a0" /><stop offset="1" stopColor="#6c6c6c" />
        </radialGradient>
        <linearGradient id="skin" gradientUnits="userSpaceOnUse" x1="584" y1="467" x2="779" y2="456">
          <stop offset="0" stopColor="#ccd492" /><stop offset="0.12" stopColor="#d4db99" /><stop offset="0.32" stopColor="#d6dd9b" />
          <stop offset="0.46" stopColor="#c2ca8c" /><stop offset="0.6" stopColor="#adb47c" /><stop offset="0.75" stopColor="#8f9668" />
          <stop offset="0.86" stopColor="#767d56" /><stop offset="1" stopColor="#757c56" />
        </linearGradient>
        <linearGradient id="lid">
          <stop offset="0" stopColor="#b8bd86" /><stop offset="0.15" stopColor="#7b8159" /><stop offset="0.55" stopColor="#a9b07a" /><stop offset="0.8" stopColor="#d6dd9b" />
        </linearGradient>
        <pattern id="mesh" width="2" height="2" patternUnits="userSpaceOnUse">
          <rect width="2" height="2" fill="#c0c891" /><rect width="1" height="1" fill="#7f8c68" /><rect x="1" y="1" width="1" height="1" fill="#7f8c68" />
        </pattern>
        <pattern id="meshDark" width="2" height="2" patternUnits="userSpaceOnUse">
          <rect width="2" height="2" fill="#8b90a0" /><rect width="1" height="1" fill="#43465e" /><rect x="1" y="1" width="1" height="1" fill="#43465e" />
        </pattern>
        <pattern id="meshSoft" width="2" height="2" patternUnits="userSpaceOnUse">
          <rect width="2" height="2" fill="#c2c98e" /><rect width="1" height="1" fill="#a8b481" /><rect x="1" y="1" width="1" height="1" fill="#a8b481" />
        </pattern>
      </defs>

      <g stroke="#fff" strokeWidth="2.4" fill="none">
        <path d="M16.500 144V320M16 179h22M16 228h22M16 277.500h22M16 326h22M51.500 341V862M51 374.500h22M51 423.500h22M51 767h21M51 816h22M51 864.500h22" />
        <path d="M86.500 438V717M86 472.500h21M86 522.500h21M86 571.500h22M86 620h22M86 668.500h22M86 717h21M86.500 878V913.500H108" />
      </g>
      <Ball x={16.5} y={326} /><Ball x={51.5} y={374.5} plus /><Ball x={51.5} y={423.5} />
      <Ball x={51.5} y={767} plus /><Ball x={51.5} y={864.5} />

      <path d="M570 226L598 716Q700 716 792 705L764 214Q690 224 648 226Q600 228 570 226z" fill="url(#skin)" />
      <path d="M570 225Q590 214 764 213Q700 223 648 226Q600 228 570 225z" fill="url(#lid)" />
      <path d="M570 226C572 220 650 215 692 213Q740 211 764 214C745 219 680 225 630 226.500Q585 228 570 226M649.500 226L677.500 715M598 716Q700 717 793 705M684 214l1 9" fill="none" stroke={O} strokeWidth="2.2" />

      {wrapped.map(([pts, dx, dy], i) => {
        const s = onSkin(pts, dx, dy);
        return <g key={i}>
          {dot(s, "h" + i, "#fff", 1.5)}
          <polygon points={s} fill={pts === COL_C ? "url(#meshSoft)" : "url(#mesh)"} stroke={O} strokeWidth="2" />
          {dot(s, "o" + i, O, 1.7)}
          {pts === COL_C && <polyline points={onSkin([[407, 146], [409, 180], [412, 220], [415, 268]], dx, dy)} stroke="#e8802a" strokeWidth="1.4" fill="none" />}
        </g>;
      })}
      <g fill="url(#meshDark)" stroke={O} strokeWidth="0.9">
        <polygon points={onSkin([[262, 206], [300, 206], [300, 232], [272, 290], [240, 290], [235, 270]], 0, 0)} />
        <polygon points={onSkin(BACK, 0, 0)} /><polygon points={onSkin(BACK, 12, 205)} />
        <polygon points={onSkin(BACK_SMALL, 0, 0)} /><polygon points={onSkin(BACK_SMALL, 11, 205)} />
      </g>
      <g fill="none" stroke={O} strokeWidth="1">
        <polyline points={onSkin(THIN, 0, 0)} /><polyline points={onSkin(THIN, 12, 205)} />
        <polyline points={onSkin([[303, 203], [335, 202], [375, 263], [345, 328], [270, 330], [246, 290]], 0, 0)} />
        {[0, 1, 2].map(i => <polygon key={i} strokeWidth="1.8" points={onSkin([[62, 195], [72, 195], [76, 250], [78, 325], [70, 325]], i * 12, i * 205)} />)}
      </g>
      {dot(onSkin([[170, 197], [122, 326], [175, 324], [182, 402], [136, 534], [187, 529], [335, 202], [270, 330], [345, 328]], 0, 0), "w", "#fff", 1.3)}
      <g fill="none" stroke="#fff" strokeWidth="1.2">
        <path d="M650.700 436L708 433L712 493L652.700 496zM650.700 465L710 462M674.300 435.500L676.700 495M684.300 433L687.700 494M647 468L687 467" />
      </g>
      <g fill="none" stroke="#dede00" strokeWidth="1.3">
        <path d="M677.500 402L680 463.500L738 462M670 391l6 9M678 391l-5 15M741 444h10M741 453h10M746 444v9M740 461h12M742 461a3 3 0 1 0 6 0" />
      </g>

      <g fill="none" stroke="#fff" strokeWidth="1.1">
        {flat.map(([dx, dy], i) => {
          const s = shift(FLAT, dx, dy, 840.5, 210);
          return <g key={i}><polygon points={s} /><g stroke="none">{dot(s, "f" + i, "#fff", 1.8)}</g></g>;
        })}
      </g>

      <path d="M1702 138C1735 134 1776 160 1775 200L1697 207Q1693 160 1702 138z" fill="#1a4660" />
      <g fill="none" stroke="#dcc4fb" strokeWidth="2">
        <path d="M1704 119L1711 242M1702 138C1735 134 1776 160 1775 200L1708 204L1697 207Q1693 160 1702 138" />
        <path d="M1671 264L1688 260v4zM1736 258L1762 256v2l-26 2.500" fill="#dcc4fb" />
      </g>
      <circle cx="1704" cy="119" r="4.500" fill="#dcc4fb" />
      <g fill="#e6e600" fontFamily="Noto Sans, sans-serif" fontSize="17">
        <text x="1714" y="120">z</text><text x="1784" y="202">y</text><text x="1710" y="210">x</text>
      </g>
      <text x="1847" y="897" fill="#e8e8f0" fontFamily="Noto Sans, sans-serif" fontSize="16">.y</text>
    </Scene>
  );
}

const MiniWindow = styled.div`
  position: absolute;
  left: 1686px;
  top: 138px;
  width: 48px;
  height: 94px;
  border-radius: 5px;
  overflow: hidden;
  background: linear-gradient(90deg, #f4f4fa, #cfcfe6 18px 38px, #8c8ca4);
  box-shadow: 0 0 1px #555, 0 8px 16px rgba(0, 0, 0, 0.3);
`;
const MiniTitle = styled.div`
  height: 38px;
  background: #f3f3f3;
  padding: 9px 1px 0 11px;
  display: flex;
  justify-content: space-between;
  line-height: 19px;
  color: #111;
`;
const MiniClose = styled.span`
  width: 25px;
  height: 25px;
  background: #c84b50;
  color: #fff;
  font-size: 15px;
  font-weight: 700;
  text-align: center;
  line-height: 23px;
`;
const MiniBody = styled.div`
  position: relative;
  padding: 21px 0 0 10px;
  &::before { content: ""; position: absolute; left: 4px; top: 5px; width: 21px; height: 3px; background: linear-gradient(#fff 66%, #99a 66%); }
`;

const Dialog = styled.section`
  position: absolute;
  left: 1458px;
  top: 368px;
  width: 389px;
  height: 448px;
  border-radius: 9px;
  overflow: hidden;
  display: flex;
  flex-direction: column;
  background: linear-gradient(180deg, #eedfcd 38px, #f6e3c8 160px, #fde4bd 300px);
  box-shadow: 0 0 1px #444, 0 10px 26px rgba(0, 0, 0, 0.4);
  font-size: 15px;
  color: #222230;
`;
const DialogTitle = styled.h2`
  flex: none;
  margin: 0;
  height: 38px;
  padding: 0 23px 2px 11px;
  display: flex;
  align-items: center;
  font-size: 15px;
  font-weight: 400;
  letter-spacing: 0.1px;
  color: #888;
  background: #f3f3f3;
`;
const DialogHint = styled.span`
  margin-left: auto;
  margin-right: 47px;
`;
const Row = styled.div`
  position: relative;
  display: flex;
  align-items: center;
  height: ${p => p.$h}px;
  margin: ${p => p.$m || 0};
`;
const Txt = styled.span`
  white-space: nowrap;
  letter-spacing: ${p => p.$ls || 0}px;
  width: ${p => (p.$w ? p.$w + "px" : "auto")};
`;
const Field = styled.div`
  width: 193px;
  height: 26px;
  border: 1px solid #888;
  background: #fff;
  padding-left: 4px;
  line-height: 25px;
  letter-spacing: 0.15px;
`;
const FieldButton = styled.div`
  width: 27px;
  height: 27px;
  padding: 2px;
  background: #d8d8ec;
  border: 2px solid;
  border-color: #fff #777 #777 #fff;
`;
const Fieldset = styled.div`
  position: relative;
  height: 160px;
  margin: 15px 11px 0 12px;
  border: 1px solid #a0a0a0;
  outline: 1px solid #fff;
  outline-offset: -2px;
  padding: 16px 1px 0;
`;
const Legend = styled.span`
  position: absolute;
  left: 9px;
  top: -11px;
  padding: 1px 5px 0 3px;
  line-height: 21px;
  letter-spacing: 0.15px;
  background: #f0e0cc;
`;
const List = styled.div`
  height: 110px;
  border: 1px solid #7c7c88;
  background: #fff;
  padding: 1px 2px;
`;
const Option = styled.div`
  height: 21px;
  line-height: 22px;
  padding-left: 2px;
  letter-spacing: 0.2px;
  background: #0078d7;
  color: #fff;
  outline: 1px dotted #d08030;
  outline-offset: -1px;
`;
const ButtonRow = styled.div`
  display: flex;
  gap: ${p => p.$gap}px;
  margin: ${p => p.$m};
`;
const Button = styled.button`
  ${ui}
  position: relative;
  width: ${p => p.$w}px;
  height: 29px;
  padding: 0 ${p => p.$pr || 0}px 0 ${p => p.$pl || 0}px;
  font-size: 15px;
  letter-spacing: ${p => p.$ls ?? 0.2}px;
  color: #222230;
  background: #cfcfe6;
  border: solid;
  border-width: 3px 3px 4px 3px;
  border-color: #fbfbff #70708c #70708c #f0f0fa;
  outline: ${p => (p.$default ? "1px solid #555" : "none")};
  outline-offset: -1px;
`;
const Lamp = styled.i`
  position: absolute;
  left: 6px;
  top: 3px;
  width: 15px;
  height: 15px;
  border-radius: 50%;
  background: radial-gradient(circle at 35% 30%, #fff, ${p => p.$c} 40%, ${p => p.$d});
`;
const Check = styled.span`
  width: 16px;
  height: 16px;
  margin: -3px 5px 0 0;
  background: #ffffdc;
  border: 1.5px solid #555;
`;
const Corner = styled.svg`
  position: absolute;
  left: 0;
  bottom: 0;
  width: 66px;
  height: 54px;
`;

const Side = styled.aside`
  width: 51px;
  height: 836px;
  padding-left: 13px;
  background: linear-gradient(90deg, #fff 2px, #f0f0f8 7px, #cfcfe6 14px 40px, #b4b4cc 45px, #9595aa 51px);
`;
const SideBlock = styled.div`
  position: relative;
  height: ${p => p.$h}px;
  padding-top: ${p => p.$pt}px;
  &::before { content: ""; position: absolute; left: -6px; top: 5px; width: 22px; height: 3px; background: linear-gradient(#fff 66%, #8c8ca0 66%); }
`;
const SideTool = styled.div`
  position: relative;
  height: ${p => p.$h}px;
`;
const ChairBox = styled.div`
  margin-left: -2px;
`;

const Chevron = styled.span`
  font-size: 26px;
  line-height: 20px;
  color: #9a9aac;
  width: 21px;
`;
const Brand = styled.svg`
  width: 54px;
  height: 44px;
  overflow: visible;
`;

const StatusBar = styled.footer`
  flex: none;
  height: 30px;
  display: flex;
  align-items: center;
  background: #cfcfe6;
  padding-left: 5px;
`;
const StatusText = styled.span`
  width: 1455px;
  font-size: 15px;
  letter-spacing: 0.36px;
  line-height: 28px;
`;
const Command = styled.span`
  width: 374px;
  height: 27px;
  background: #fdfdfd;
  border-bottom: 1px solid #888;
`;
const StatusButton = styled.span`
  width: 41px;
  height: 28px;
  margin-right: 2px;
  padding: 3px 0 0 10px;
  border: 2px solid;
  border-color: #fff #777788 #777788 #fff;
`;

const Taskbar = styled.div`
  flex: none;
  height: 59px;
  display: flex;
  align-items: center;
  background: #1c1c1c;
  border-top: 1px solid #303030;
  padding-left: 13px;
  color: #fff;
`;
const TaskApp = styled.div`
  position: relative;
  width: 55.15px;
  height: 50px;
  display: flex;
  align-items: center;
  justify-content: center;
`;
const ActiveTile = styled.div`
  width: 50px;
  height: 50px;
  border-radius: 5px;
  background: #2a2a2a;
  border: 1px solid #343434;
  display: flex;
  align-items: center;
  justify-content: center;
`;
const Dash = styled.i`
  position: absolute;
  bottom: 0;
  width: ${p => (p.$on ? 20 : 8)}px;
  height: 4px;
  border-radius: 2px;
  background: ${p => (p.$on ? "#4cc2ff" : "#9a9a9a")};
`;
const Badge = styled.b`
  position: absolute;
  right: 6px;
  top: 3px;
  width: 20px;
  height: 20px;
  border-radius: 50%;
  background: #4cc2ff;
  color: #111;
  font-size: 14px;
  font-weight: 400;
  line-height: 20px;
  text-align: center;
`;
const Tray = styled.div`
  margin-left: auto;
  display: flex;
  align-items: center;
  width: 325px;
`;
const TrayCell = styled.div`
  width: ${p => p.$w}px;
  display: flex;
  flex-direction: column;
  align-items: ${p => p.$a || "center"};
  font-size: 14.8px;
  line-height: 20px;
  white-space: nowrap;
`;
const TaskSvg = styled.svg`
  display: block;
  width: 30px;
  height: 30px;
  overflow: visible;
`;
const TraySvg = styled.svg`
  width: 22px;
  height: 22px;
  overflow: visible;
  fill: none;
  stroke: #fff;
  stroke-width: 1.4;
`;

function TaskIcons() {
  return (
    <>
      <TaskApp><TaskSvg viewBox="0 0 30 30"><defs><linearGradient id="wn" x2="1" y2="1"><stop stopColor="#7be8ff" /><stop offset="1" stopColor="#1ea0f8" /></linearGradient></defs><path d="M0 0h14.300v14.300H0zM15.700 0H30v14.300H15.700zM0 15.700h14.300V30H0zM15.700 15.700H30V30H15.700z" fill="url(#wn)" /></TaskSvg></TaskApp>
      <TaskApp><TaskSvg viewBox="0 0 30 30"><defs><linearGradient id="se" x1="0" y1="1" x2="1" y2="0"><stop stopColor="#0a78e0" /><stop offset="0.6" stopColor="#2aa0e8" /><stop offset="1" stopColor="#60f0a0" /></linearGradient></defs><path d="M20 21l7 7" stroke="#1a7ce0" strokeWidth="4" strokeLinecap="round" /><circle cx="13.500" cy="12.500" r="11" fill="#44505c" stroke="url(#se)" strokeWidth="3" /></TaskSvg></TaskApp>
      <TaskApp><TaskSvg viewBox="0 0 30 30"><path d="M0 3a1.500 1.500 0 0 1 1.500-1.500H10l3 4H29A1 1 0 0 1 30 7v4H0z" fill="#e2a020" /><path d="M0 9h11l3-3h15a1 1 0 0 1 1 1v20a1 1 0 0 1-1 1H1a1 1 0 0 1-1-1z" fill="#ffd458" /><path d="M5 28v-4a4 4 0 0 1 4-4h12a4 4 0 0 1 4 4v4z" fill="#1a78d0" /><path d="M9 24h12" stroke="#0a508a" strokeWidth="1.500" /></TaskSvg></TaskApp>
      <TaskApp><TaskSvg viewBox="0 0 30 30"><defs><linearGradient id="ed" x1="0" y1="0" x2="1" y2="0.300"><stop stopColor="#1a8ce8" /><stop offset="0.600" stopColor="#30c4d8" /><stop offset="1" stopColor="#60e078" /></linearGradient></defs><circle cx="15" cy="15" r="15" fill="url(#ed)" /><path d="M0 13C3 6 13 5 17 10c-5 0-8 4-7 9 1 6 8 9 17 5-5 8-17 8-23 1Q0 20 0 13z" fill="#0c5cb4" /><path d="M17 11c-3 2-4 5-2 8 3 3 10 3 14 0 1-1-3 6-6 7-9 3-16-2-15-10 1-4 4-5 9-5z" fill="#0e48a0" /><path d="M18 12c-1 4-3 5-1 7 4 2 10 1 12-3z" fill="#1c1c1c" /></TaskSvg></TaskApp>
      <TaskApp><TaskSvg viewBox="0 0 30 30"><path d="M9 7V3a2 2 0 0 1 2-2h8a2 2 0 0 1 2 2v4" fill="none" stroke="#3ab0f0" strokeWidth="2" /><rect x="0.500" y="6" width="29" height="24" rx="3" fill="#f0f0f0" /><path d="M9 12h5.500v5.500H9z" fill="#f25022" /><path d="M15.500 12H21v5.500h-5.500z" fill="#7fba00" /><path d="M9 18.500h5.500V24H9z" fill="#00a4ef" /><path d="M15.500 18.500H21V24h-5.500z" fill="#ffb900" /></TaskSvg></TaskApp>
      <TaskApp><TaskSvg viewBox="0 0 30 30"><defs><linearGradient id="ng" x1="0" y1="1" x2="1" y2="0"><stop stopColor="#2050e0" /><stop offset="0.500" stopColor="#8a30a0" /><stop offset="1" stopColor="#f82828" /></linearGradient></defs><rect width="30" height="30" fill="url(#ng)" /><path d="M12 24H7l2-3c-3-8 0-15 6-15s9 7 6 15l2 3h-5v-5c3-3 2-9-3-9s-6 6-3 9z" fill="none" stroke="#fff" strokeWidth="1.500" /></TaskSvg></TaskApp>
      <TaskApp><TaskSvg viewBox="0 0 30 30"><rect width="30" height="30" rx="1.500" fill="#107c10" /><circle cx="15" cy="15" r="12.500" fill="#fff" /><path d="M5 4Q10 5 15 10Q20 5 25 4V0H5z" fill="#107c10" /><path d="M9 3Q12 3 15 6Q18 3 21 3Q15 0 9 3z" fill="#fff" /><path d="M8 6C12 8 21 17 24.500 26M22 6C18 8 9 17 5.500 26" stroke="#107c10" strokeWidth="2.200" fill="none" /></TaskSvg></TaskApp>
      <TaskApp><TaskSvg viewBox="0 0 30 30"><path d="M15 0C11 3 6 4 1.500 4.500V14H15z" fill="#2ba4f0" /><path d="M15 0c4 3 9 4 13.500 4.500V14H15z" fill="#1a88e0" /><path d="M1.500 14H15v16C7 27 2 21 1.500 14z" fill="#1470c8" /><path d="M28.500 14H15v16c8-3 13-9 13.500-16z" fill="#0e5cb0" /></TaskSvg></TaskApp>
      <TaskApp><TaskSvg viewBox="0 0 30 30"><path d="M1.500 28.500L3.500 21A13.200 13.200 0 1 1 9 26.500z" fill="none" stroke="#25d366" strokeWidth="2.600" /><path d="M9 9c2-2 3-1 4 2 0 1-2 2-1 3 1 2 3 4 5 4 1 0 2-2 3-1 3 1 3 2 2 3-6 5-16-5-13-11z" fill="#25d366" /></TaskSvg><Badge>1</Badge></TaskApp>
      <TaskApp><TaskSvg viewBox="0 0 30 30"><rect y="4" width="30" height="23" rx="1.500" fill="#3c3c3c" /><path d="M0 5.500A1.500 1.500 0 0 1 1.500 4H28.500A1.500 1.500 0 0 1 30 5.500V8.500H0z" fill="#b0b0b0" /><path d="M9 4h6v4.500H9z" fill="#d8d8d8" /><path d="M4 12l6 5-6 5M13 22h10" stroke="#eee" strokeWidth="2.600" fill="none" /></TaskSvg><Dash /></TaskApp>
      <TaskApp><ActiveTile><Planet size={30} height={28} frame /></ActiveTile><Dash $on /></TaskApp>
    </>
  );
}

export default function App() {
  return (
    <Screen>
      <Global />
      <TitleBar>
        <Planet size={17} height={17} />
        <AppTitle>CATIA V5 - [Part1]</AppTitle>
        <WinButtons>
          <WinButton><TraySvg viewBox="0 0 22 22"><path d="M5 10.500h12" stroke="#111" /></TraySvg></WinButton>
          <WinButton><TraySvg viewBox="0 0 22 22"><path d="M7.500 4.500h6q3 0 3 3v6M5.500 6.500h8a1 1 0 0 1 1 1v8a1 1 0 0 1-1 1h-8a1 1 0 0 1-1-1v-8a1 1 0 0 1 1-1z" stroke="#111" /></TraySvg></WinButton>
          <WinButton><TraySvg viewBox="0 0 22 22"><path d="M5 4l12 12M17 4L5 16" stroke="#111" /></TraySvg></WinButton>
        </WinButtons>
      </TitleBar>
      <MenuBar>
        <MenuItem $w={27} $pl={1} $plain><Planet size={23} height={21} /></MenuItem>
        <MenuItem $w={63} $pl={8} $active>Start</MenuItem>
        <MenuItem $w={145.5} $pl={9} $plain $ls={0.75}>ENOVIA V5 VPM</MenuItem>
        <MenuItem $w={54}>File</MenuItem>
        <MenuItem $w={58}>Edit</MenuItem>
        <MenuItem $w={63}>View</MenuItem>
        <MenuItem $w={70}>Insert</MenuItem>
        <MenuItem $w={70}>Tools</MenuItem>
        <MenuItem $w={89}>Window</MenuItem>
        <MenuItem $w={60}>Help</MenuItem>
        <MdiButtons>
          <MdiButton><Glyph viewBox="0 0 14 14" $s={14}><path d="M3 10h8" stroke="#7a8a98" strokeWidth="2.500" /></Glyph></MdiButton>
          <MdiButton><Glyph viewBox="0 0 14 14" $s={14}><path d="M4.500 5V2.500h8v5h-3M1.500 6h8v5.500h-8zM1.500 7h8M4.500 3h8" stroke="#7a8a98" strokeWidth="1.600" fill="none" /></Glyph></MdiButton>
          <MdiButton><Glyph viewBox="0 0 14 14" $s={14}><path d="M3 3l8 9M11 3l-8 9" stroke="#7a8a98" strokeWidth="2.800" /></Glyph></MdiButton>
        </MdiButtons>
      </MenuBar>
      <Toolbar $h={51} $pl={27} $line="3px solid #6e6e72"><Groups groups={TOP} pt={11} /></Toolbar>
      <Middle>
        <Viewport>
          <ModelScene />
          <Tree>
            {ROWS.map((r, i) => (
              <TreeRow key={i} $indent={INDENT[r.l]}>
                <TreeIcon $w={ICON_W[r.l]}><RowIcon name={r.icon} /></TreeIcon>
                <TreeLabel $hot={r.hot} $under={r.under} $ls={r.ls}>{r.t}</TreeLabel>
              </TreeRow>
            ))}
          </Tree>
          <MiniWindow>
            <MiniTitle>S<MiniClose>×</MiniClose></MiniTitle>
            <MiniBody><Icon name="sketch" size={28} height={28} /><Drop $x={36} $y={49} /></MiniBody>
          </MiniWindow>
          <Dialog>
            <DialogTitle>Split Definition<DialogHint>?</DialogHint><Glyph viewBox="0 0 14 14" $s={14}><path d="M1 1l12 12M13 1L1 13" stroke="#777" strokeWidth="1.200" /></Glyph></DialogTitle>
            <Row $h={27} $m="15px 0 0 12px"><Txt $w={115.5} $ls={0.15}>Element to cut:</Txt><Field>Cylinder.1</Field><FieldButton><Icon name="multiOut" size={20} height={20} /></FieldButton></Row>
            <Fieldset>
              <Legend>Cutting elements</Legend>
              <List><Option>Develop.1</Option></List>
              <ButtonRow $gap={1} $m="2px 0 0 1.5px"><Button $w={180}>Remove</Button><Button $w={179} $pr={1}>Replace</Button></ButtonRow>
            </Fieldset>
            <ButtonRow $gap={0} $m="1px 0 0 12px"><Button $w={367}>Other side</Button></ButtonRow>
            <Row $h={24} $m="0 0 0 12px"><Txt $ls={0.33}>Optional parameters</Txt></Row>
            <Row $h={26} $m="2px 0 0 12px"><Check /><Txt $ls={0.4}>Keep both sides</Txt></Row>
            <Row $h={26} $m="5px 0 0 12px"><Check /><Txt $ls={0.15}>Intersections computation</Txt></Row>
            <ButtonRow $gap={0} $m="3px 0 0 12px"><Button $w={174} $ls={0.5} $pr={2}>Show parameters &gt;&gt;</Button></ButtonRow>
            <Corner viewBox="0 0 66 54">
              <defs>
                <radialGradient id="glow" cx="0.6" cy="0.6" r="0.5"><stop stopColor="#ff9030" /><stop offset="0.3" stopColor="#ffc860" stopOpacity="0.8" /><stop offset="1" stopColor="#fde4bd" stopOpacity="0" /></radialGradient>
                <linearGradient id="globe" x1="0" y1="1" x2="0.500" y2="0"><stop stopColor="#102838" /><stop offset="0.600" stopColor="#4c90b4" /><stop offset="1" stopColor="#c0d8e0" /></linearGradient>
              </defs>
              <ellipse cx="24" cy="34" rx="36" ry="32" fill="url(#glow)" />
              <path d="M0 31Q34 28 54 54H0z" fill="url(#globe)" />
              <path d="M0 38Q20 38 32 54H0z" fill="#6a6460" opacity="0.700" />
              <path d="M4 36q14 0 22 10M2 46q8-1 14 7" stroke="#d8e4e8" strokeWidth="1.500" fill="none" opacity="0.700" />
            </Corner>
            <ButtonRow $gap={9} $m="10px 0 0 82px">
              <Button $w={94} $pl={20} $default><Lamp $c="#20b020" $d="#064006" />OK</Button>
              <Button $w={93} $pl={18}><Lamp $c="#e02020" $d="#500000" />Cancel</Button>
              <Button $w={93} $pr={3} $ls={0}>Preview</Button>
            </ButtonRow>
          </Dialog>
        </Viewport>
        <Side>
          <SideBlock $h={62} $pt={20}><ChairBox><Icon name="chair" size={32} height={32} /></ChairBox></SideBlock>
          <SideBlock $h={172} $pt={21}>
            {["greyA", "greyB", "greyC", "greyD"].map(n => <SideTool key={n} $h={37.6}><Icon name={n} size={29} height={29} /></SideTool>)}
          </SideBlock>
          <SideBlock $h={101} $pt={20}>
            <SideTool $h={43}><Icon name="cursor" size={29} height={29} /><Drop $x={26} $y={29} /></SideTool>
            <SideTool $h={38}><Icon name="multiSel" size={29} height={29} /><Drop $x={26} $y={26} /></SideTool>
          </SideBlock>
          <SideBlock $h={200} $pt={20}>
            {["explode", "develop", "develop2"].map(n => <SideTool key={n} $h={38}><Icon name={n} size={29} height={29} /></SideTool>)}
          </SideBlock>
        </Side>
      </Middle>
      <Toolbar $h={50} $pl={6} $line="1px solid #606068">
        <Groups groups={BOTTOM} pt={13} />
        <Chevron>»</Chevron>
        <Brand viewBox="0 0 54 44">
          <path d="M13 4c5-1 10-1 10 1s-4 5-9 6c4 0 5 2 2 5" fill="none" stroke="#e0302c" strokeWidth="2.200" />
          <path d="M10 17h4c6 1 3 10-10 11z" fill="none" stroke="#4a4090" strokeWidth="2.800" strokeLinejoin="round" />
          <path d="M31 14c-9 0-11 2-7 5s4 8-8 8" fill="none" stroke="#f0a020" strokeWidth="3" />
          <text x="10" y="39.500" fontFamily="Open Sans, sans-serif" fontSize="12" fontWeight="800" fontStyle="italic" fill="#4a4090" textLength="41">CATIA</text>
        </Brand>
      </Toolbar>
      <StatusBar>
        <StatusText>Select a point, curve or surface to cut a curve or select a curve or surface to cut a surface</StatusText>
        <Command />
        <StatusButton><Glyph viewBox="0 0 20 18" $s={20} $h={18}><path d="M0 0h20v18H0z" fill="#b8b8c0" /><path d="M20 0v18H0" stroke="#444" strokeWidth="2" fill="none" /><path d="M3 4h9v8H3z" fill="#ddd" stroke="#000" strokeWidth="2" /><path d="M14 12h3v3h-3z" /></Glyph></StatusButton>
        <StatusButton><Glyph viewBox="0 0 20 18" $s={20} $h={18}><path d="M2 16h16V6M4 12C1 3 14-2 15 6c0 5-5 6-8 4M9 5h2v5M8 10h5" fill="none" stroke="#aaaab8" strokeWidth="2" /></Glyph></StatusButton>
      </StatusBar>
      <Taskbar>
        <TaskIcons />
        <Tray>
          <TrayCell $w={18}><TraySvg viewBox="0 0 22 22"><path d="M5 14l6-6 6 6" strokeWidth="1.800" /></TraySvg></TrayCell>
          <TrayCell $w={78}><span>ENG</span><span>IN</span></TrayCell>
          <TrayCell $w={16}><TraySvg viewBox="0 0 22 22"><circle cx="10.500" cy="10.500" r="9" /><path d="M2 8h17M2 13h9M10.500 1.500c-6 5-6 13 0 18M10.500 1.500c3 2 4.500 5 4.500 8" /><circle cx="15.500" cy="15.500" r="5" fill="#1c1c1c" /><path d="M12 19l7-7" /></TraySvg></TrayCell>
          <TrayCell $w={42}><TraySvg viewBox="0 0 22 22"><path d="M2 8h3l5-4.500v15L5 14H2zM13 8q2 3 0 6" /><path d="M16 6q4 5 0 10M19 4q5 7 0 14" stroke="#666" /></TraySvg></TrayCell>
          <TrayCell $w={18}><TraySvg viewBox="0 0 22 22"><path d="M10 6h8q2 0 2 2v7q0 2-2 2H6q-2 0-3-1M21 9v4" strokeWidth="1.800" /><path d="M3 13C0 7 3 3 7 1c3 5 1 10-4 12z" fill="#fff" /></TraySvg></TrayCell>
          <TrayCell $w={100} $a="flex-end"><span>10:40 PM</span><span>05-09-2025</span></TrayCell>
          <TrayCell $w={36}><TraySvg viewBox="0 0 22 22"><path d="M3 16V9c0-7 13-8 15-2v9l2 2H1zM8 20h6" fill="#fff" /><path d="M7 9h4l-4 5h4M13 7h3l-3 4h3" stroke="#1c1c1c" /><path d="M17 1h4l-4 4h4" /></TraySvg></TrayCell>
        </Tray>
      </Taskbar>
    </Screen>
  );
}
